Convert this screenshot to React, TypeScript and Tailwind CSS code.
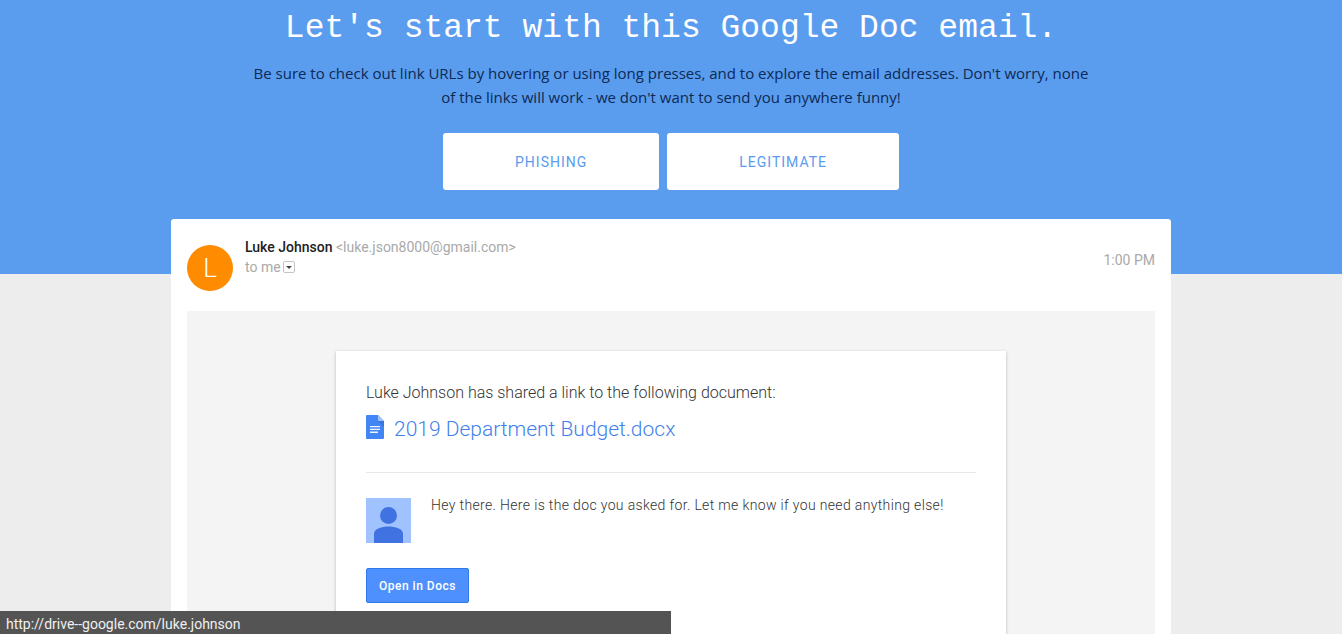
import React from 'react';

const message = {
  sender: 'Luke Johnson',
  address: '<luke.json8000@gmail.com>',
  time: '1:00 PM',
  document: '2019 Department Budget.docx',
  note: 'Hey there. Here is the doc you asked for. Let me know if you need anything else!',
  url: 'http://drive--google.com/luke.johnson',
};

const DocIcon: React.FC = () => (
  <svg className="h-6 w-[18px] shrink-0" viewBox="0 0 18 24" aria-hidden="true">
    <path d="M1 0h11l6 6v17a1 1 0 0 1-1 1H1a1 1 0 0 1-1-1V1a1 1 0 0 1 1-1z" fill="#4285f4" />
    <path d="M12 6h6v6z" fill="#3b74dc" />
    <path d="M12 0l6 6h-5a1 1 0 0 1-1-1z" fill="#a3c4fb" />
    <path d="M4 11h10v1.300H4zM4 13.800h10v1.300H4zM4 16.600h8v1.300H4z" fill="#f1f5fe" />
  </svg>
);

const PersonIcon: React.FC = () => (
  <svg className="h-[45px] w-[45px] shrink-0" viewBox="0 0 45 45" aria-hidden="true">
    <path d="M0 0h45v45H0z" fill="#a0c3ff" />
    <circle cx="22.5" cy="17.5" r="8.5" fill="#4072e2" />
    <path d="M8 45V35.500c0-4.500 8-7 14.500-7s14.500 2.500 14.500 7V45z" fill="#4072e2" />
  </svg>
);

const VerdictButton: React.FC<{ label: string }> = ({ label }) => (
  <button
    type="button"
    className="h-[57px] rounded-[3px] bg-white px-[72px] text-sm tracking-[1px] text-[#5a9bed] uppercase"
  >
    {label}
  </button>
);

const App: React.FC = () => {
  return (
    <div className="flex min-h-screen flex-col bg-[#ededed] font-['Roboto',sans-serif]">
      {/* Question */}
      <header className="bg-[#5a9cee] px-4 pt-[6px] pb-[84px] text-center">
        <h1 className="font-['Liberation_Mono',monospace] text-[33px] leading-[46px] text-white">
          Let's start with this Google Doc email.
        </h1>
        <p className="mx-auto mt-[9px] max-w-[840px] font-['Open_Sans',sans-serif] text-[15px] leading-6 text-[#0c2a55]">
          Be sure to check out link URLs by hovering or using long presses, and to explore the email
          addresses. Don't worry, none of the links will work - we don't want to send you anywhere funny!
        </p>
        <div className="mt-6 flex justify-center gap-2">
          <VerdictButton label="Phishing" />
          <VerdictButton label="Legitimate" />
        </div>
      </header>

      {/* Email */}
      <main className="mx-auto -mt-[55px] flex w-full max-w-[1000px] flex-1 flex-col rounded-t-[3px] bg-white px-4 pt-[18px]">
        <div className="flex text-sm leading-5 text-[#a9a9a9]">
          <div className="mt-2 flex h-[46px] w-[46px] items-center justify-center rounded-full bg-[#ff8c00] text-[26px] font-light text-white">
            L
          </div>
          <div className="ml-3 flex-1">
            <div>
              <span className="font-medium text-[#222]">{message.sender}</span> {message.address}
            </div>
            <div className="flex items-center">
              to me
              <button
                type="button"
                aria-label="Show details"
                className="ml-[2px] flex h-3 w-3 items-center justify-center rounded-[2px] border border-[#c4c4c4]"
              >
                <svg className="h-[3px] w-[6px]" viewBox="0 0 6 3" aria-hidden="true">
                  <path d="M0 0h6L3 3z" fill="#444" />
                </svg>
              </button>
            </div>
          </div>
          <div className="mt-[13px]">{message.time}</div>
        </div>

        <div className="mt-5 flex flex-1 flex-col bg-[#f4f4f4] px-4 pt-10">
          <article className="mx-auto w-full max-w-[670px] flex-1 bg-white px-[30px] pt-[30px] font-light text-[#333] shadow-[0_1px_3px_rgba(0,0,0,0.25)]">
            <p className="text-base leading-6">
              {message.sender} has shared a link to the following document:
            </p>
            <a href="#" className="mt-2 flex items-center gap-[10px] text-[21px] leading-6 text-[#427fed]">
              <DocIcon />
              <span className="mt-1">{message.document}</span>
            </a>
            <hr className="mt-[31px] border-[#e8e8e8]" />
            <div className="mt-[25px] flex gap-5">
              <PersonIcon />
              <p className="text-sm leading-[15px] tracking-wide">{message.note}</p>
            </div>
            <a
              href="#"
              className="mt-[25px] inline-flex h-[35px] items-center rounded-[2px] border border-[#3079ed] bg-[#4d90fe] px-3 text-xs font-medium tracking-[0.5px] text-white"
            >
              Open in Docs
            </a>
          </article>
        </div>
      </main>

      {/* Link preview */}
      <div className="fixed bottom-0 left-0 w-1/2 bg-[#545454] px-[6px] pt-[3px] text-sm leading-5 text-[#f0f0f0]">
        {message.url}
      </div>
    </div>
  );
};

export default App;
